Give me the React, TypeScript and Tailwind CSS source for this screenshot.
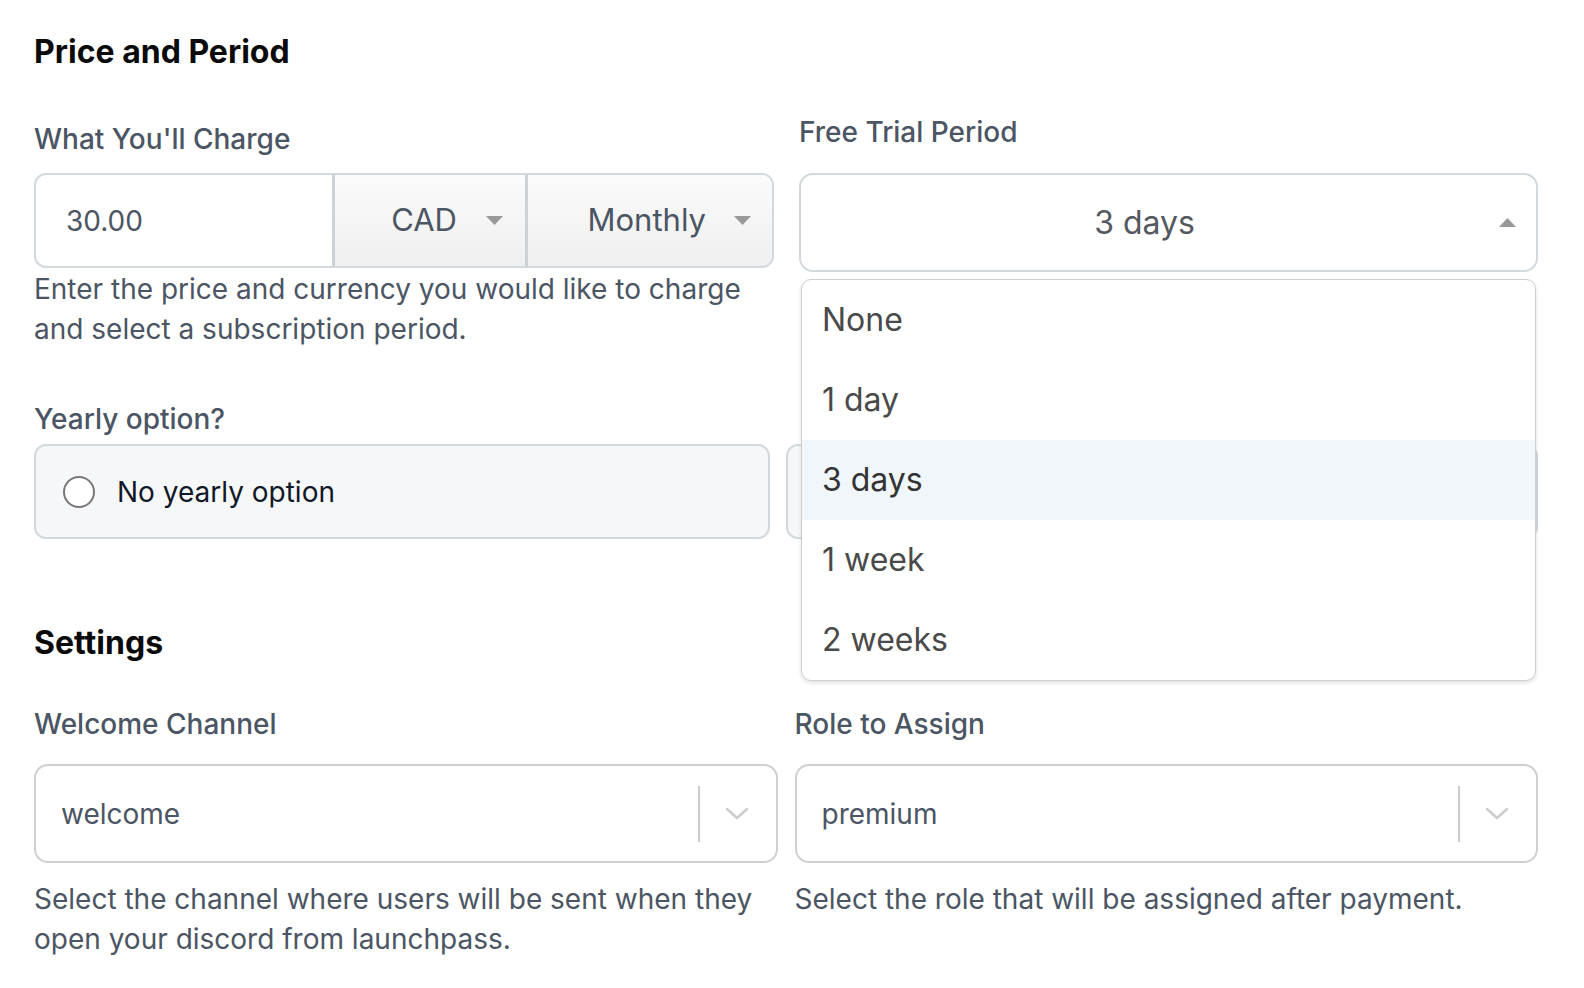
import React from "react";

const Caret = ({ up = false }: { up?: boolean }) => (
  <svg width="17" height="9" viewBox="0 0 17 9" className="shrink-0">
    {up ? <polygon points="0,9 8.5,0 17,9" fill="#999" /> : <polygon points="0,0 17,0 8.5,9" fill="#999" />}
  </svg>
);

const Chevron = () => (
  <svg width="24" height="14" viewBox="0 0 24 14" fill="none" className="shrink-0">
    <path d="M2 2 L12 11 L22 2" stroke="#cccccc" strokeWidth="2.4" strokeLinecap="round" strokeLinejoin="round" />
  </svg>
);

const trialOptions = ["None", "1 day", "3 days", "1 week", "2 weeks"];

const SelectBox = ({ value }: { value: string }) => (
  <div className="flex h-[99px] items-center rounded-[14px] border-2 border-[#d0d0d0] bg-white pl-[25px] pr-[27px]">
    <span className="flex-1 text-[28px] text-[#4b5563]">{value}</span>
    <div className="mr-[25px] h-[56px] w-[2px] bg-[#cccccc]" />
    <Chevron />
  </div>
);

export default function App() {
  return (
    <div className="h-screen w-full overflow-hidden bg-white font-['Inter','Noto_Sans',sans-serif] text-[#4b5563]">
      <div className="w-[1538px] pl-[34px] pt-[33px]">
        <h2 className="text-[32px] leading-[38px] font-bold text-[#0a0a0a]">Price and Period</h2>

        {/* price + trial */}
        <div className="mt-[45px] grid grid-cols-[740px_1fr] gap-x-[25px]">
          <div>
            <div className="pt-[7px] text-[28px] leading-[32px] font-medium text-[#4b5563]">What You'll Charge</div>
            <div className="mt-[18px] flex h-[95px] overflow-hidden rounded-[12px] border-2 border-[#d3d8df] bg-white">
              <div className="flex w-[296px] items-center pl-[30px] text-[28px] text-[#4b5563]">30.00</div>
              <div className="w-[3px] bg-[#cdd2d9]" />
              <div className="flex w-[190px] items-center justify-end gap-[29px] bg-linear-to-b from-[#fbfbfb] to-[#efefef] pr-[22px] text-[31px] text-[#4b5563]">
                <span>CAD</span>
                <Caret />
              </div>
              <div className="w-[3px] bg-[#cdd2d9]" />
              <div className="flex flex-1 items-center justify-end gap-[28px] bg-linear-to-b from-[#fbfbfb] to-[#efefef] pr-[21px] text-[31px] text-[#4b5563]">
                <span>Monthly</span>
                <Caret />
              </div>
            </div>
            <p className="mt-[1px] text-[28px] leading-[40px] text-[#4b5563]">
              Enter the price and currency you would like to charge
              <br />
              and select a subscription period.
            </p>
          </div>

          <div className="relative">
            <div className="text-[28px] leading-[32px] font-medium text-[#4b5563]">Free Trial Period</div>
            <div className="relative mt-[25px]">
              <div className="flex h-[99px] items-center rounded-[14px] border-2 border-[#d3d8df] bg-white pr-[20px]">
                <span className="flex-1 pr-[11px] text-center text-[32px] text-[#55595f]">3 days</span>
                <Caret up />
              </div>
              <div className="absolute top-[106px] right-[2px] left-[2px] z-10 overflow-hidden rounded-[10px] border border-[#cfcfcf] bg-white shadow-[0_2px_4px_rgba(0,0,0,0.12)]">
                {trialOptions.map((opt) => (
                  <div
                    key={opt}
                    className={`flex h-[80px] items-center pl-[20px] text-[32px] ${
                      opt === "3 days" ? "bg-[#f1f6fb] text-[#333]" : "text-[#4a4a4a]"
                    }`}
                  >
                    {opt}
                  </div>
                ))}
              </div>
            </div>
          </div>
        </div>

        {/* yearly option */}
        <div className="mt-[54px] text-[28px] leading-[32px] font-medium text-[#4b5563]">Yearly option?</div>
        <div className="mt-[9px] grid grid-cols-[736px_1fr] gap-x-[16px]">
          <label className="flex h-[95px] items-center gap-[22px] rounded-[12px] border-2 border-[#d3d8df] bg-[#f6f7f9] pl-[27px]">
            <span className="h-[32px] w-[32px] rounded-full border-2 border-[#777] bg-white" />
            <span className="text-[28px] text-[#111827]">No yearly option</span>
          </label>
          <label className="flex h-[95px] items-center rounded-[12px] border-2 border-[#d3d8df] bg-[#f6f7f9] pl-[27px]">
            <span className="h-[32px] w-[32px] rounded-full border-2 border-[#777] bg-white" />
          </label>
        </div>

        <h2 className="mt-[85px] text-[32px] leading-[38px] font-bold text-[#0a0a0a]">Settings</h2>

        <div className="mt-[46px] grid grid-cols-2 gap-x-[17px]">
          <div>
            <div className="text-[28px] leading-[32px] font-medium text-[#4b5563]">Welcome Channel</div>
            <div className="mt-[24px]">
              <SelectBox value="welcome" />
            </div>
            <p className="mt-[16px] text-[28px] leading-[40px] text-[#4b5563]">
              Select the channel where users will be sent when they
              <br />
              open your discord from launchpass.
            </p>
          </div>
          <div>
            <div className="text-[28px] leading-[32px] font-medium text-[#4b5563]">Role to Assign</div>
            <div className="mt-[24px]">
              <SelectBox value="premium" />
            </div>
            <p className="mt-[16px] text-[28px] leading-[40px] text-[#4b5563]">
              Select the role that will be assigned after payment.
            </p>
          </div>
        </div>
      </div>
    </div>
  );
}
